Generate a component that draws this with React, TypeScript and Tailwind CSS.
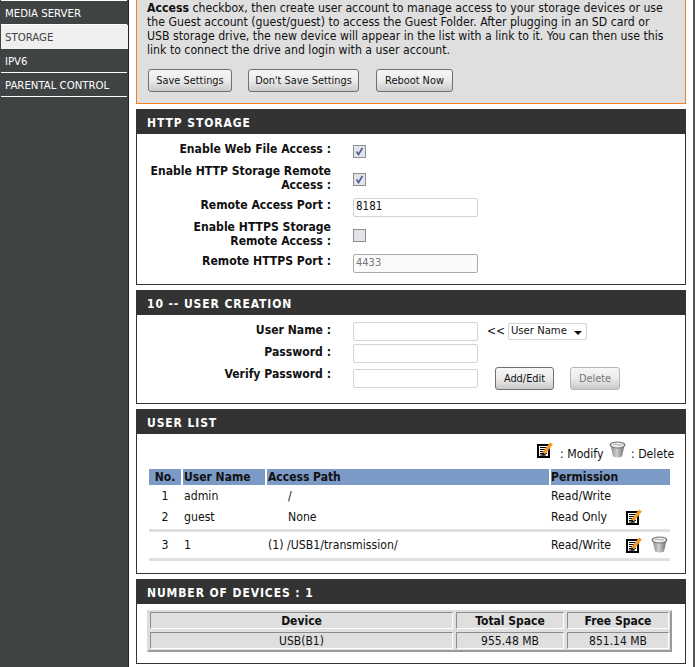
import React from "react";

const F = "[font-family:'DejaVu_Sans_Condensed','DejaVu_Sans',sans-serif]";

function NoteIcon() {
  return (
    <svg width="17" height="17" viewBox="0 0 17 17" className="block">
      <rect x="0" y="3" width="13" height="14" fill="#000" />
      <rect x="2" y="5" width="9" height="10" fill="#fff" />
      <path d="M3 6.5h7M3 8.5h6M3 10.5h5M3 12.5h7M3 14h6" stroke="#000" strokeWidth="1" />
      <path d="M6.5 12.5 L14.5 2.5" stroke="#f09a28" strokeWidth="3.6" />
      <path d="M5.2 15 L5.6 11.5 L8.6 13.8 Z" fill="#111" />
    </svg>
  );
}

function TrashIcon() {
  return (
    <svg width="17" height="17" viewBox="0 0 17 17" className="block">
      <defs>
        <linearGradient id="tb" x1="0" x2="1" y1="0" y2="0">
          <stop offset="0" stopColor="#8a8a8a" />
          <stop offset="0.45" stopColor="#cfcfcf" />
          <stop offset="1" stopColor="#6a6a6a" />
        </linearGradient>
      </defs>
      <path d="M1.5 4 L4 15.5 Q8.5 17.5 13 15.5 L15.5 4 Z" fill="url(#tb)" />
      <ellipse cx="8.5" cy="4" rx="8" ry="3.4" fill="#777" />
      <ellipse cx="8.5" cy="4" rx="6.5" ry="2.4" fill="#ececec" />
      <path d="M4 4 Q6 2.4 8 3.5 T13 3.5" stroke="#a5a5a5" strokeWidth="0.8" fill="none" />
    </svg>
  );
}

function Btn({ children, w, disabled }: { children: React.ReactNode; w: string; disabled?: boolean }) {
  return (
    <div
      className={`${w} h-[23px] pt-[2px] flex items-center justify-center rounded-[3px] border text-[10.9px] bg-gradient-to-b from-[#f6f6f6] via-[#ebebeb] to-[#c9c9c9] ${
        disabled ? "border-[#b5b5b5] text-[#777]" : "border-[#707070] text-[#111]"
      }`}
    >
      {children}
    </div>
  );
}

function Section({ title, children, className }: { title: string; children: React.ReactNode; className?: string }) {
  return (
    <section className={`border border-[#333] mt-[5px] ${className ?? ""}`}>
      <h2 className="h-[25px] -mx-px -mt-px bg-[#333] text-white font-bold text-[12px] tracking-[0.9px] pl-[11px] pt-[3px] flex items-center">
        {title}
      </h2>
      {children}
    </section>
  );
}

function Row({
  label,
  h,
  children,
  labelShift = "-mt-[4px]",
  controls = "",
}: {
  label: React.ReactNode;
  h: string;
  children: React.ReactNode;
  labelShift?: string;
  controls?: string;
}) {
  return (
    <div className={`flex items-center ${h}`}>
      <div className={`w-[194px] text-right font-bold text-[12.1px] leading-[14px] text-[#111] ${labelShift}`}>{label}</div>
      <div className={`ml-[22px] flex items-center ${controls}`}>{children}</div>
    </div>
  );
}

function Field({ value, muted }: { value?: string; muted?: boolean }) {
  return (
    <div
      className={`w-[125px] h-[19px] border rounded-[2px] pl-[2px] flex items-center ${
        muted ? "text-[#777] bg-[#fafafa] border-[#aaa] text-[11px]" : "text-[#111] bg-white border-[#cfd4d8] text-[11.5px]"
      }`}
    >
      {value}
    </div>
  );
}

function Check({ on }: { on?: boolean }) {
  return (
    <div className="w-[13px] h-[13px] border border-[#8e8f8f] bg-[#e4e4e8] flex items-center justify-center">
      {on && (
        <svg width="11" height="11" viewBox="0 0 11 11">
          <path d="M2.5 5.5 L4.5 8.5 L8.5 2" stroke="#4a5c9a" strokeWidth="1.6" fill="none" />
        </svg>
      )}
    </div>
  );
}

function NavItem({ children, active }: { children: React.ReactNode; active?: boolean }) {
  return (
    <div
      className={`h-[24px] ml-px pt-[4px] flex items-center pl-[4px] text-[11.3px] border-b ${
        active ? "bg-[#efefef] text-[#444] border-[#efefef] mr-0" : "mr-px text-white border-white"
      }`}
    >
      {children}
    </div>
  );
}

const Cell = ({ children, className }: { children: React.ReactNode; className?: string }) => (
  <div
    className={`h-[17px] flex items-center justify-center border border-t-[#8c8c8c] border-l-[#8c8c8c] border-r-white border-b-white text-[12px] ${className ?? ""}`}
  >
    {children}
  </div>
);

const gridCols = "grid grid-cols-[32px_82px_282px_1fr] gap-x-[2px]";

export default function App() {
  return (
    <div className={`w-[698px] h-[667px] overflow-hidden bg-white flex ${F}`}>
      <nav className="w-[129px] h-full shrink-0 bg-[#404344] border-r border-[#222]">
        <div className="h-px mx-px bg-white" />
        <NavItem>MEDIA SERVER</NavItem>
        <NavItem active>STORAGE</NavItem>
        <NavItem>IPV6</NavItem>
        <NavItem>PARENTAL CONTROL</NavItem>
      </nav>
      <main className="w-[550px] ml-[7px] shrink-0 flex flex-col text-[#111]">
        <div className="h-[104px] border border-t-0 border-[#f58220] bg-[#dfdfdf] pl-[10px]">
          <p className="text-[12.2px] leading-[14px] whitespace-nowrap pt-px">
            <b>Access</b> checkbox, then create user account to manage access to your storage devices or use
            <br />
            the Guest account (guest/guest) to access the Guest Folder. After plugging in an SD card or
            <br />
            USB storage drive, the new device will appear in the list with a link to it. You can then use this
            <br />
            link to connect the drive and login with a user account.
          </p>
          <div className="flex mt-[12px] pl-px">
            <Btn w="w-[84px]">Save Settings</Btn>
            <div className="ml-[16px]">
              <Btn w="w-[111px]">Don't Save Settings</Btn>
            </div>
            <div className="ml-[17px]">
              <Btn w="w-[77px]">Reboot Now</Btn>
            </div>
          </div>
        </div>

        <Section title="HTTP STORAGE" className="h-[176px]">
          <div className="pt-[6px]">
            <Row label="Enable Web File Access :" h="h-[22px]">
              <Check on />
            </Row>
            <Row label={<>Enable HTTP Storage Remote<br />Access :</>} h="h-[34px]" labelShift="-mt-[2px]">
              <Check on />
            </Row>
            <Row label="Remote Access Port :" h="h-[22px]">
              <Field value="8181" />
            </Row>
            <Row label={<>Enable HTTPS Storage<br />Remote Access :</>} h="h-[34px]" labelShift="-mt-[2px]">
              <Check />
            </Row>
            <Row label="Remote HTTPS Port :" h="h-[22px]">
              <Field value="4433" muted />
            </Row>
          </div>
        </Section>

        <Section title="10 -- USER CREATION" className="h-[114px]">
          <div className="pt-[5px]">
            <Row label="User Name :" h="h-[22px]" labelShift="-mt-[2px]">
              <Field />
              <span className="ml-[9px] w-[16px] text-[12px]">&lt;&lt;</span>
              <div className="ml-[5px] w-[79px] h-[17px] border border-[#cfd4d8] rounded-[2px] flex items-center pl-[2px] text-[11.2px] relative">
                User Name
                <span className="absolute right-[4px] top-[7px] w-0 h-0 border-x-[4px] border-x-transparent border-t-[4px] border-t-[#111]" />
              </div>
            </Row>
            <Row label="Password :" h="h-[22px]" labelShift="-mt-[2px]">
              <Field />
            </Row>
            <Row label="Verify Password :" h="h-[22px]" labelShift="-mt-[2px]" controls="mt-[7px]">
              <Field />
              <div className="ml-[17px] flex">
                <Btn w="w-[59px]">Add/Edit</Btn>
                <div className="ml-[16px]">
                  <Btn w="w-[50px]" disabled>
                    Delete
                  </Btn>
                </div>
              </div>
            </Row>
          </div>
        </Section>

        <Section title="USER LIST" className="h-[165px]">
          <div className="h-[35px] pr-[10px] flex justify-end items-start pt-[7px] text-[12.2px] leading-[14px]">
            <NoteIcon />
            <span className="ml-[6px] mt-[6px] w-[43px] whitespace-nowrap">: Modify</span>
            <span className="ml-[6px]">
              <TrashIcon />
            </span>
            <span className="ml-[5px] mt-[6px] w-[44px] whitespace-nowrap">: Delete</span>
          </div>
          <div className="mx-[12px] w-[521px] text-[12.2px]">
            <div className={`${gridCols} h-[16px] items-center font-bold text-[12px] leading-[16px]`}>
              <div className="bg-[#7b9ac6] h-full text-center">No.</div>
              <div className="bg-[#7b9ac6] h-full pl-px">User Name</div>
              <div className="bg-[#7b9ac6] h-full pl-px">Access Path</div>
              <div className="bg-[#7b9ac6] h-full">Permission</div>
            </div>
            <div className={`${gridCols} h-[21px] items-center pt-[1px]`}>
              <div className="text-center">1</div>
              <div className="pl-px">admin</div>
              <div className="pl-[21px]">/</div>
              <div>Read/Write</div>
            </div>
            <div className={`${gridCols} h-[21px] items-center pt-[1px]`}>
              <div className="text-center">2</div>
              <div className="pl-px">guest</div>
              <div className="pl-[21px]">None</div>
              <div className="flex items-center">
                <span className="w-[75px]">Read Only</span>
                <NoteIcon />
              </div>
            </div>
            <div className="h-[3px] mt-[2px] bg-[#dfdfdf]" />
            <div className={`${gridCols} h-[26px] items-center`}>
              <div className="text-center">3</div>
              <div className="pl-px">1</div>
              <div className="pl-px">(1) /USB1/transmission/</div>
              <div className="flex items-center">
                <span className="w-[75px]">Read/Write</span>
                <NoteIcon />
                <span className="ml-[8px]">
                  <TrashIcon />
                </span>
              </div>
            </div>
            <div className="h-[3px] bg-[#dfdfdf]" />
          </div>
        </Section>

        <Section title="NUMBER OF DEVICES : 1" className="h-[85px]">
          <div className="ml-[10px] mt-[6px] w-[525px] h-[42px] bg-[#dfdfdf] border-2 border-t-[#dcdcdc] border-l-[#dcdcdc] border-r-[#9a9a9a] border-b-[#9a9a9a] pl-px">
            <div className="grid grid-cols-[303px_108px_102px] gap-x-[3px] gap-y-[3px]">
              <Cell className="font-bold">Device</Cell>
              <Cell className="font-bold">Total Space</Cell>
              <Cell className="font-bold">Free Space</Cell>
              <Cell>USB(B1)</Cell>
              <Cell>955.48 MB</Cell>
              <Cell>851.14 MB</Cell>
            </div>
          </div>
        </Section>
      </main>
      <div className="ml-[7px] w-[2px] h-full bg-[#555]" />
    </div>
  );
}
